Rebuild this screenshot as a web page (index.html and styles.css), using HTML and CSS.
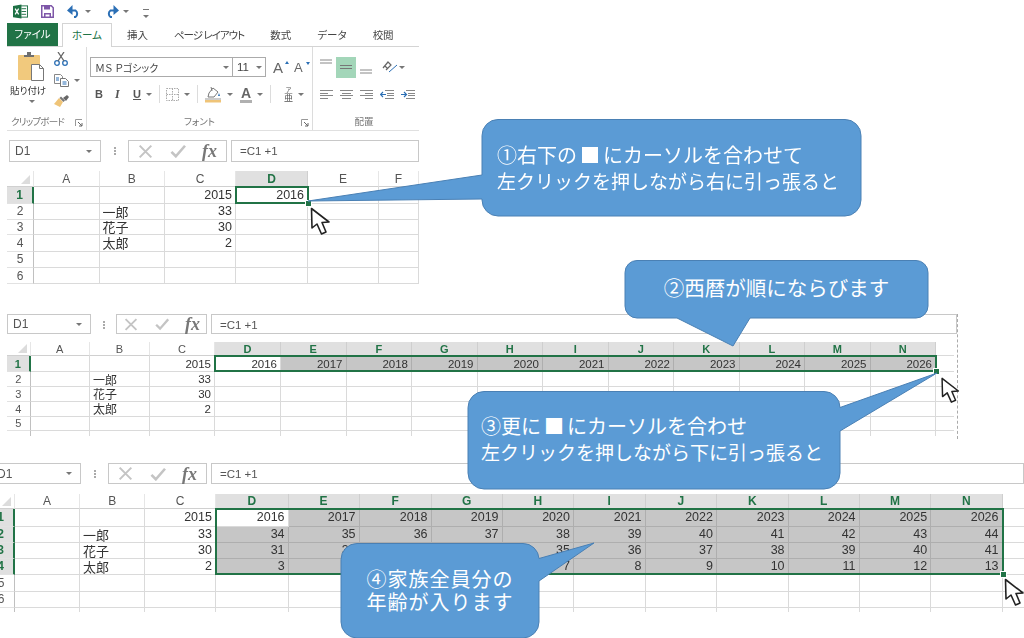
FILE: index.html
```html
<!DOCTYPE html>
<html lang="ja">
<head>
    <meta charset="UTF-8">
    <title>Excel 連続データ</title>
    <link rel="stylesheet" href="styles.css">
</head>
<body>

    <svg class="defs" width="0" height="0">
        <symbol id="pointer" viewBox="0 0 20 29">
            <path d="M1.5 1.5 2 21l5-4 4.5 10 4.5-2-4-9.5 7-.5z" fill="#fff" stroke="#222" stroke-width="1.6" stroke-linejoin="round"/>
        </symbol>
        <symbol id="launcher" viewBox="0 0 8 8">
            <path d="M.5 7V.5H7" fill="none" stroke="#999"/><path d="M3 3l4 4M7 4v3H4" fill="none" stroke="#666"/>
        </symbol>
        <symbol id="cross" viewBox="0 0 18 18">
            <path d="M2 2l14 14M16 2 2 16" stroke="#c4c4c4" stroke-width="2.4"/>
        </symbol>
        <symbol id="check" viewBox="0 0 18 16">
            <path d="M1.5 9l5 5L17 2" fill="none" stroke="#c4c4c4" stroke-width="3"/>
        </symbol>
    </svg>

    <!-- 1: ribbon and first sheet -->
    <section class="shot shot-1">
        <div class="qat">
            <svg class="q-excel" width="15" height="15" viewBox="0 0 16 15"><rect x="6.5" y="1.5" width="9" height="12" fill="#fff" stroke="#1f7145"/><path d="M9 4.5h5M9 7.5h5M9 10.5h5" stroke="#1f7145"/><path d="M0 1.5 9 0v15l-9-1.5z" fill="#1f7145"/><path d="M2.3 4.5 6 10.5M6 4.5l-3.7 6" stroke="#fff" stroke-width="1.3"/></svg>
            <svg class="q-save" width="13" height="13" viewBox="0 0 13 13"><path d="M.75.75h9.5l2 2v9.5H.75z" fill="#fff" stroke="#7e57a8" stroke-width="1.5"/><path d="M3 1h6v3.5H3zM3 8h7v4H3z" fill="#7e57a8"/><path d="M4.5 9.5h4v2h-4z" fill="#fff"/></svg>
            <svg class="q-undo" width="14" height="13" viewBox="0 0 14 13"><path d="M2 5.5h6.5a4 4 0 0 1 0 6.5H7" fill="none" stroke="#2b6fb5" stroke-width="2"/><path d="M5.5 0v10L0 5.5z" fill="#2b6fb5"/></svg>
            <span class="caret q-caret"></span>
            <svg class="q-redo" width="14" height="13" viewBox="0 0 14 13"><path d="M12 5.5H5.500a4 4 0 0 0 0 6.5H7" fill="none" stroke="#2b6fb5" stroke-width="2"/><path d="M8.5 0v10L14 5.5z" fill="#2b6fb5"/></svg>
            <span class="caret q-caret"></span>
            <span class="q-more"><span class="caret"></span></span>
        </div>
        <div class="tabs">
            <div class="tab-file">ファイル</div>
            <div class="tab-home">ホーム</div>
            <div class="tab">挿入</div>
            <div class="tab tab-wide">ページ レイアウト</div>
            <div class="tab">数式</div>
            <div class="tab">データ</div>
            <div class="tab">校閲</div>
        </div>
        <div class="ribbon">
            <div class="group g-clip">
                <div class="group-body">
                    <div class="paste">
                        <svg class="paste-icon" width="27" height="29" viewBox="0 0 27 29"><rect y="3" width="22" height="25" rx="1" fill="#f1c97d"/><path d="M6 5V3h3V0h4v3h3v2z" fill="#6f6f6f"/><path d="M13.5 12.5h8l4 4v12h-12z" fill="#fff" stroke="#777"/><path d="M21.5 12.5v4h4" fill="none" stroke="#777"/></svg>
                        <span class="paste-label">貼り付け</span>
                        <span class="caret"></span>
                    </div>
                    <div class="clip-tools">
                        <svg width="14" height="14" viewBox="0 0 14 14"><circle cx="3" cy="11" r="2.3" fill="none" stroke="#2b6fb5" stroke-width="1.3"/><circle cx="11" cy="11" r="2.3" fill="none" stroke="#2b6fb5" stroke-width="1.3"/><path d="M4 9 10 0M10 9 4 0" stroke="#666" stroke-width="1.3"/></svg>
                        <div class="copy-row">
                            <svg width="15" height="13" viewBox="0 0 15 13"><path d="M.5.5h6l2 2v7h-8z" fill="#fff" stroke="#888"/><path d="M6.500 4.5h5l3 3v5h-8z" fill="#fff" stroke="#777"/><path d="M2 4h3M2 6h3M8.5 8h4M8.5 10h4" stroke="#2b6fb5"/></svg>
                            <span class="caret"></span>
                        </div>
                        <svg width="15" height="12" viewBox="0 0 15 12"><path d="M0 9 5 3l4 4-3 5z" fill="#efc478"/><path d="M5.5 3 7 1.5l4 4L9.5 7z" fill="#777"/><path d="M9 3l4-3 2 2-3 4z" fill="#666"/></svg>
                    </div>
                </div>
                <div class="group-label">クリップボード</div>
                <svg class="launcher" width="8" height="8"><use href="#launcher"/></svg>
            </div>
            <div class="group g-font">
                <div class="group-body stack">
                    <div class="tool-row">
                        <div class="select font-name">ＭＳ Ｐゴシック<span class="caret"></span></div>
                        <div class="select font-size">11<span class="caret"></span></div>
                        <div class="grow">A<i class="tip-up"></i></div>
                        <div class="grow small">A<i class="tip-down"></i></div>
                    </div>
                    <div class="tool-row row-two">
                        <b class="btn-b">B</b>
                        <i class="btn-i">I</i>
                        <u class="btn-u">U</u><span class="caret"></span>
                        <span class="vsep"></span>
                        <svg width="13" height="13" viewBox="0 0 13 13"><path d="M.5.5h12v12H.5zM6.5.5v12M.5 6.5h12" fill="none" stroke="#aaa" stroke-dasharray="1.5 1"/></svg><span class="caret"></span>
                        <span class="vsep"></span>
                        <svg width="18" height="17" viewBox="0 0 18 17"><path d="M5 7l4-5 5 4-4 5H4z" fill="#fff" stroke="#777"/><path d="M7 1l1 4" stroke="#777"/><path d="M15 7l1 3-2 0z" fill="#2b6fb5"/><path d="M1 14h16v2.5H1z" fill="#efc478"/><path d="M1 13h16" stroke="#999"/></svg><span class="caret"></span>
                        <span class="font-color">A</span><span class="caret"></span>
                        <span class="vsep"></span>
                        <span class="phonetic"><small>ア</small>亜</span><span class="caret"></span>
                    </div>
                </div>
                <div class="group-label">フォント</div>
                <svg class="launcher" width="8" height="8"><use href="#launcher"/></svg>
            </div>
            <div class="group g-align">
                <div class="group-body stack">
                    <div class="tool-row">
                        <span class="align-btn"><svg width="12" height="21" viewBox="0 0 12 21"><path d="M0 3h12M0 6h12" stroke="#888"/></svg></span>
                        <span class="align-btn on"><svg width="12" height="21" viewBox="0 0 12 21"><path d="M0 8.5h12M0 11.5h12" stroke="#777"/></svg></span>
                        <span class="align-btn"><svg width="12" height="21" viewBox="0 0 12 21"><path d="M0 13h12M0 16h12" stroke="#888"/></svg></span>
                        <svg class="orient" width="16" height="15" viewBox="0 0 16 15"><path d="M1 8l5-6 3 3-5 5M3 6l3 3" fill="none" stroke="#666" stroke-width="1.2"/><path d="M7 12 15 5" stroke="#2b6fb5" stroke-width="1"/></svg>
                        <span class="caret"></span>
                    </div>
                    <div class="tool-row row-two para">
                        <svg width="13" height="9" viewBox="0 0 13 9"><path d="M0 .5h13M0 3.500h8M0 5.500h13M0 8.500h8" stroke="#888"/></svg>
                        <svg width="13" height="9" viewBox="0 0 13 9"><path d="M0 .5h13M2 3.500h9M0 5.500h13M2 8.500h9" stroke="#888"/></svg>
                        <svg width="13" height="9" viewBox="0 0 13 9"><path d="M0 .5h13M5 3.500h8M0 5.500h13M5 8.500h8" stroke="#888"/></svg>
                        <svg width="14" height="9" viewBox="0 0 14 9"><path d="M5 .5h9M7 3.500h7M7 5.500h7M5 8.500h9" stroke="#888"/><path d="M6 4.500H1M3 2 .5 4.500 3 7" fill="none" stroke="#2b6fb5" stroke-width="1.2"/></svg>
                        <svg width="14" height="9" viewBox="0 0 14 9"><path d="M5 .5h9M7 3.500h7M7 5.500h7M5 8.500h9" stroke="#888"/><path d="M0 4.500h5M3 2l2.500 2.500L3 7" fill="none" stroke="#2b6fb5" stroke-width="1.2"/></svg>
                    </div>
                </div>
                <div class="group-label">配置</div>
            </div>
        </div>
        <div class="fbar">
            <div class="name-box">D1<span class="caret"></span></div>
            <span class="dots"></span>
            <div class="fx-box">
                <svg class="ic-x" width="15" height="15"><use href="#cross"/></svg>
                <svg class="ic-ok" width="16" height="14"><use href="#check"/></svg>
                <span class="fx">fx</span>
            </div>
            <div class="formula">=C1 +1</div>
        </div>
        <div class="sheet">
            <div class="hc corner"></div><div class="hc">A</div><div class="hc">B</div><div class="hc">C</div><div class="hc on">D</div><div class="hc">E</div><div class="hc">F</div>
            <div class="hr on">1</div><div></div><div></div><div>2015</div><div>2016</div><div></div><div></div>
            <div class="hr">2</div><div></div><div class="name">一郎</div><div>33</div><div></div><div></div><div></div>
            <div class="hr">3</div><div></div><div class="name">花子</div><div>30</div><div></div><div></div><div></div>
            <div class="hr">4</div><div></div><div class="name">太郎</div><div>2</div><div></div><div></div><div></div>
            <div class="hr">5</div><div></div><div></div><div></div><div></div><div></div><div></div>
            <div class="hr">6</div><div></div><div></div><div></div><div></div><div></div><div></div>
            <div class="range"><span class="handle"></span></div>
        </div>
    </section>

    <!-- 2: one row filled -->
    <section class="shot shot-2">
        <div class="fbar">
            <div class="name-box">D1<span class="caret"></span></div>
            <span class="dots"></span>
            <div class="fx-box">
                <svg class="ic-x" width="15" height="15"><use href="#cross"/></svg>
                <svg class="ic-ok" width="16" height="14"><use href="#check"/></svg>
                <span class="fx">fx</span>
            </div>
            <div class="formula">=C1 +1</div>
        </div>
        <div class="sheet">
            <div class="hc corner"></div><div class="hc">A</div><div class="hc">B</div><div class="hc">C</div><div class="hc on">D</div><div class="hc on">E</div><div class="hc on">F</div><div class="hc on">G</div><div class="hc on">H</div><div class="hc on">I</div><div class="hc on">J</div><div class="hc on">K</div><div class="hc on">L</div><div class="hc on">M</div><div class="hc on">N</div><div class="blank"></div>
            <div class="hr on">1</div><div></div><div></div><div>2015</div><div>2016</div><div class="g">2017</div><div class="g">2018</div><div class="g">2019</div><div class="g">2020</div><div class="g">2021</div><div class="g">2022</div><div class="g">2023</div><div class="g">2024</div><div class="g">2025</div><div class="g">2026</div><div class="blank"></div>
            <div class="hr">2</div><div></div><div class="name">一郎</div><div>33</div><div></div><div></div><div></div><div></div><div></div><div></div><div></div><div></div><div></div><div></div><div></div><div class="blank"></div>
            <div class="hr">3</div><div></div><div class="name">花子</div><div>30</div><div></div><div></div><div></div><div></div><div></div><div></div><div></div><div></div><div></div><div></div><div></div><div class="blank"></div>
            <div class="hr">4</div><div></div><div class="name">太郎</div><div>2</div><div></div><div></div><div></div><div></div><div></div><div></div><div></div><div></div><div></div><div></div><div></div><div class="blank"></div>
            <div class="hr">5</div><div></div><div></div><div></div><div></div><div></div><div></div><div></div><div></div><div></div><div></div><div></div><div></div><div></div><div></div><div class="blank"></div>
            <div class="hr"></div><div></div><div></div><div></div><div></div><div></div><div></div><div></div><div></div><div></div><div></div><div></div><div></div><div></div><div></div><div class="blank"></div>
            <div class="range"><span class="handle"></span></div>
        </div>
    </section>

    <!-- 3: all rows filled -->
    <section class="shot shot-3">
        <div class="fbar">
            <div class="name-box">D1<span class="caret"></span></div>
            <span class="dots"></span>
            <div class="fx-box">
                <svg class="ic-x" width="15" height="15"><use href="#cross"/></svg>
                <svg class="ic-ok" width="16" height="14"><use href="#check"/></svg>
                <span class="fx">fx</span>
            </div>
            <div class="formula">=C1 +1</div>
        </div>
        <div class="sheet">
            <div class="hc corner"></div><div class="hc">A</div><div class="hc">B</div><div class="hc">C</div><div class="hc on">D</div><div class="hc on">E</div><div class="hc on">F</div><div class="hc on">G</div><div class="hc on">H</div><div class="hc on">I</div><div class="hc on">J</div><div class="hc on">K</div><div class="hc on">L</div><div class="hc on">M</div><div class="hc on">N</div><div class="blank"></div>
            <div class="hr on">1</div><div></div><div></div><div>2015</div><div>2016</div><div class="g">2017</div><div class="g">2018</div><div class="g">2019</div><div class="g">2020</div><div class="g">2021</div><div class="g">2022</div><div class="g">2023</div><div class="g">2024</div><div class="g">2025</div><div class="g">2026</div><div class="blank"></div>
            <div class="hr on">2</div><div></div><div class="name">一郎</div><div>33</div><div class="g">34</div><div class="g">35</div><div class="g">36</div><div class="g">37</div><div class="g">38</div><div class="g">39</div><div class="g">40</div><div class="g">41</div><div class="g">42</div><div class="g">43</div><div class="g">44</div><div class="blank"></div>
            <div class="hr on">3</div><div></div><div class="name">花子</div><div>30</div><div class="g">31</div><div class="g">32</div><div class="g">33</div><div class="g">34</div><div class="g">35</div><div class="g">36</div><div class="g">37</div><div class="g">38</div><div class="g">39</div><div class="g">40</div><div class="g">41</div><div class="blank"></div>
            <div class="hr on">4</div><div></div><div class="name">太郎</div><div>2</div><div class="g">3</div><div class="g">4</div><div class="g">5</div><div class="g">6</div><div class="g">7</div><div class="g">8</div><div class="g">9</div><div class="g">10</div><div class="g">11</div><div class="g">12</div><div class="g">13</div><div class="blank"></div>
            <div class="hr">5</div><div></div><div></div><div></div><div></div><div></div><div></div><div></div><div></div><div></div><div></div><div></div><div></div><div></div><div></div><div class="blank"></div>
            <div class="hr">6</div><div></div><div></div><div></div><div></div><div></div><div></div><div></div><div></div><div></div><div></div><div></div><div></div><div></div><div></div><div class="blank"></div>
            <div class="hr"></div><div></div><div></div><div></div><div></div><div></div><div></div><div></div><div></div><div></div><div></div><div></div><div></div><div></div><div></div><div class="blank"></div>
            <div class="range"><span class="handle"></span></div>
        </div>
    </section>

    <svg class="pointer p-1"><use href="#pointer"/></svg>
    <svg class="pointer p-2"><use href="#pointer"/></svg>
    <svg class="pointer p-3"><use href="#pointer"/></svg>

    <div class="callout c-1">
        <svg class="bubble" width="379" height="97"><path d="M16 .5H363a16 16 0 0 1 16 16V81a16 16 0 0 1-16 16H16A16 16 0 0 1 0 81V80L-174 82 0 56V16.5A16 16 0 0 1 16 .5z"/></svg>
        <p><span class="lead">①右下の<span class="sq">■</span>にカーソルを合わせて</span><br>左クリックを押しながら右に引っ張ると</p>
    </div>
    <div class="callout c-2">
        <svg class="bubble" width="303" height="58"><path d="M12 .5H291a12 12 0 0 1 12 12V46a12 12 0 0 1-12 12H125L108 86 52 58H12A12 12 0 0 1 0 46V12.5A12 12 0 0 1 12 .5z"/></svg>
        <p>②西暦が順にならびます</p>
    </div>
    <div class="callout c-3">
        <svg class="bubble" width="372" height="98"><path d="M16 .5H356a16 16 0 0 1 16 16L469-18 372 40V82a16 16 0 0 1-16 16H16A16 16 0 0 1 0 82V16.5A16 16 0 0 1 16 .5z"/></svg>
        <p><span class="lead">③更に<span class="sq">■</span>にカーソルを合わせ</span><br>左クリックを押しながら下に引っ張ると</p>
    </div>
    <div class="callout c-4">
        <svg class="bubble" width="198" height="95"><path d="M16 .5H182a16 16 0 0 1 16 15L253 0 198 38V79a16 16 0 0 1-16 16H16A16 16 0 0 1 0 79V16.5A16 16 0 0 1 16 .5z"/></svg>
        <p>④家族全員分の<br>年齢が入ります</p>
    </div>

</body>
</html>
```

FILE: styles.css
```css
* {
    box-sizing: border-box;
}
body {
    margin: 0;
    width: 1024px;
    height: 638px;
    position: relative;
    overflow: hidden;
    background: #fff;
    font-family: "Noto Sans CJK JP", "Liberation Sans", sans-serif;
    color: #333;
}
.defs {
    position: absolute;
}
.caret {
    display: inline-block;
    width: 0;
    height: 0;
    border-top: 3px solid #777;
    border-left: 3px solid transparent;
    border-right: 3px solid transparent;
}

/* the three pasted screenshots sit freely on the canvas */
.shot {
    position: absolute;
    overflow: hidden;
    filter: blur(.35px);
}
.shot-1 {
    left: 0;
    top: 0;
    width: 419px;
    height: 285px;
}
.shot-2 {
    left: 7px;
    top: 314px;
    width: 951px;
    height: 125px;
    border-right: 1px dashed #aaa;
}
.shot-3 {
    left: -12px;
    top: 463px;
    width: 1036px;
    height: 150px;
}

/* quick access */
.qat {
    height: 23px;
    display: flex;
    align-items: center;
    padding-left: 13px;
}
.q-save {
    margin-left: 13px;
}
.q-undo {
    margin-left: 13px;
}
.q-redo {
    margin-left: 14px;
}
.q-caret {
    margin-left: 4px;
}
.q-more {
    margin-left: 14px;
    border-top: 1px solid #777;
    padding-top: 1px;
    line-height: 0;
    margin-top: 3px;
}

/* tabs */
.tabs {
    height: 23px;
    display: flex;
    padding-left: 7px;
    font-size: 10.5px;
    font-feature-settings: "palt";
    color: #444;
    position: relative;
}
.tab-file {
    width: 51px;
    background: #217346;
    color: #fff;
    text-align: center;
    line-height: 22px;
}
.tab-home {
    width: 50px;
    margin-left: 4px;
    height: 24px;
    background: #fff;
    color: #217346;
    border: 1px solid #d4d4d4;
    border-bottom: 0;
    text-align: center;
    line-height: 22px;
    position: relative;
    z-index: 1;
}
.tab {
    padding: 0 13px;
    line-height: 23px;
}
.tab:nth-child(3) {
    margin-left: 2px;
}
.tab-wide {
    letter-spacing: -1px;
}

/* ribbon */
.ribbon {
    height: 85px;
    margin-left: 7px;
    display: flex;
    border-top: 1px solid #d4d4d4;
    border-bottom: 1px solid #e0e0e0;
}
.group {
    position: relative;
    display: flex;
    flex-direction: column;
}
.g-clip {
    width: 80px;
    border-right: 1px solid #dcdcdc;
}
.g-font {
    width: 226px;
    border-right: 1px solid #dcdcdc;
}
.g-align {
    flex: 1;
}
.group-body {
    flex: 1;
    display: flex;
}
.group-body.stack {
    flex-direction: column;
    padding-top: 10px;
}
.group-label {
    height: 16px;
    text-align: center;
    font-size: 9.5px;
    line-height: 15px;
    color: #777;
    font-feature-settings: "palt";
}
.g-clip .group-label {
    text-align: left;
    padding-left: 4px;
    letter-spacing: -.8px;
    white-space: nowrap;
}
.g-align .group-label {
    padding-right: 4px;
}
.launcher {
    position: absolute;
    right: 3px;
    bottom: 3px;
}
.paste {
    width: 42px;
    margin-left: 3px;
    padding-top: 5px;
    display: flex;
    flex-direction: column;
    align-items: flex-start;
}
.paste-icon {
    margin-left: 8px;
}
.paste-label {
    font-size: 9.5px;
    line-height: 14px;
    margin-top: 2px;
    white-space: nowrap;
    font-feature-settings: "palt";
}
.paste .caret {
    margin: 3px 0 0 19px;
}
.clip-tools {
    margin-left: 2px;
    padding-top: 5px;
    display: flex;
    flex-direction: column;
    gap: 8px;
    align-items: flex-start;
}
.copy-row {
    display: flex;
    align-items: center;
    gap: 5px;
}
.tool-row {
    display: flex;
    align-items: center;
    height: 20px;
    padding-left: 3px;
}
.select {
    height: 20px;
    border: 1px solid #ababab;
    display: flex;
    align-items: center;
    justify-content: space-between;
    padding: 0 3px 0 4px;
    font-size: 10px;
    color: #444;
    white-space: nowrap;
}
.font-name {
    width: 143px;
    font-family: "Liberation Sans", "Noto Sans CJK JP", sans-serif;
    font-feature-settings: "palt";
}
.font-size {
    width: 34px;
    margin-left: -1px;
    font-size: 11.5px;
    font-family: "Liberation Sans", sans-serif;
}
.grow {
    font-family: "Liberation Sans", sans-serif;
    font-size: 15px;
    color: #666;
    margin-left: 7px;
    width: 13px;
    position: relative;
}
.grow.small {
    font-size: 13px;
    margin-left: 8px;
}
.tip-up,
.tip-down {
    position: absolute;
    right: -3px;
    top: 2px;
    width: 0;
    height: 0;
    border-left: 2px solid transparent;
    border-right: 2px solid transparent;
}
.tip-up {
    border-bottom: 3px solid #2b6fb5;
}
.tip-down {
    border-top: 3px solid #2b6fb5;
}
.row-two {
    margin-top: 8px;
    height: 18px;
    font-family: "Liberation Serif", serif;
    color: #555;
    padding-left: 8px;
}
.row-two .caret {
    margin-left: 5px;
}
.btn-b {
    font: bold 11px "Liberation Sans", sans-serif;
    width: 19px;
}
.btn-i {
    font-size: 12px;
    font-weight: bold;
    width: 19px;
    padding-left: 1px;
}
.btn-u {
    font: bold 11px "Liberation Sans", sans-serif;
}
.vsep {
    width: 1px;
    height: 18px;
    background: #dcdcdc;
    margin: 0 6px 0 7px;
}
.font-color {
    font: bold 14px "Liberation Sans", sans-serif;
    line-height: 14px;
    margin-left: 7px;
    color: #666;
    border-bottom: 3px solid #b0b0b0;
    padding: 0 1px;
}
.phonetic {
    display: flex;
    flex-direction: column;
    align-items: center;
    margin-left: 7px;
    font-family: "Noto Sans CJK JP", sans-serif;
    font-size: 9px;
    line-height: 8px;
}
.phonetic small {
    font-size: 6px;
}
.align-btn {
    width: 20px;
    height: 21px;
    display: flex;
    justify-content: center;
}
.align-btn.on {
    background: #a3d6b9;
}
.orient {
    margin-left: 6px;
}
.g-align .caret {
    margin-left: 1px;
}
.para {
    padding-left: 7px;
    gap: 7px;
}

/* formula bar */
.fbar {
    height: 22px;
    display: flex;
    color: #555;
}
.shot-1 .fbar {
    margin: 9px 0 9px 9px;
}
.name-box {
    width: 92px;
    border: 1px solid #c8c8c8;
    display: flex;
    align-items: center;
    justify-content: space-between;
    padding: 0 8px 0 5px;
    font: 12px "Liberation Sans", sans-serif;
}
.dots {
    width: 2px;
    height: 8px;
    margin: 7px 12px 0 13px;
    border-left: 2px dotted #aaa;
}
.fx-box {
    width: 99px;
    border: 1px solid #c8c8c8;
    display: flex;
    align-items: center;
    padding-left: 9px;
    flex: none;
}
.ic-ok {
    margin-left: 17px;
}
.fx {
    margin-left: 16px;
    font: italic bold 18px/18px "Liberation Serif", serif;
    color: #777;
}
.formula {
    flex: 1;
    margin-left: 4px;
    border: 1px solid #c8c8c8;
    padding-left: 8px;
    font: 11.5px/20px "Liberation Sans", sans-serif;
}
.shot-2 .fbar {
    height: 20px;
    margin: 0 0 8px;
}
.shot-2 .name-box {
    width: 84px;
}
.shot-2 .dots {
    margin-right: 11px;
    margin-left: 12px;
}
.shot-2 .fx-box {
    width: 91px;
    padding-left: 7px;
}
.shot-2 .fx-box svg {
    width: 14px;
}
.shot-3 .fbar {
    height: 21px;
    margin: 0 0 10px 3px;
}
.shot-3 .name-box {
    width: 90px;
}

/* sheets */
.sheet {
    display: grid;
    position: relative;
    font-family: "Liberation Sans", "Noto Sans CJK JP", sans-serif;
}
.shot-1 .sheet {
    margin-left: 7px;
    grid-template-columns: 27px 65.5px 65.5px 71px 72px 71px 40px;
    grid-template-rows: 16px 17px 15.5px 15.5px 16.5px 16.5px 16px;
    font-size: 12.5px;
}
.shot-2 .sheet {
    grid-template-columns: 23.5px 59.5px 60px 65px 66px repeat(10, 65.5px) 18px;
    grid-template-rows: 14px 16px 15px 14.5px 15px 14.5px 15px;
    height: 94px;
    overflow: hidden;
    font-size: 11.5px;
}
.shot-3 .sheet {
    grid-template-columns: 27px 65px 65.3px 70.7px 72.6px 71px 72px 71px 71.4px 71.6px 71.4px 71.6px 71px 71.7px 71.3px 21.4px;
    grid-template-rows: 15px 17.5px 16px 16px 16.5px 16.5px 16.5px 16px;
    height: 118px;
    overflow: hidden;
    font-size: 12.5px;
}
.sheet > div {
    display: flex;
    align-items: center;
    justify-content: flex-end;
    padding-right: 3px;
    border-right: 1px solid #dadada;
    border-bottom: 1px solid #dadada;
    white-space: nowrap;
}
.sheet > .name {
    justify-content: flex-start;
    padding: 0 0 0 3px;
    font-family: "Noto Sans CJK JP", sans-serif;
    font-size: 1.04em;
}
.sheet > .g {
    background: #c6c6c6;
    border-color: #aeaeae;
}
.sheet > .hc,
.sheet > .hr {
    justify-content: center;
    padding: 0;
    color: #555;
    font-size: .96em;
}
.sheet > .hc {
    border-right-color: #e6e6e6;
    border-bottom-color: #d0d0d0;
}
.sheet > .hr {
    border-right-color: #c0c0c0;
    border-bottom-color: #e2e2e2;
}
.sheet > .hc.on,
.sheet > .hr.on {
    background: #e0e0e0;
    color: #217346;
    font-weight: bold;
    border-right-color: #cfcfcf;
}
.sheet > .hr.on {
    border-right: 2px solid #217346;
}
.sheet > .corner {
    position: relative;
}
.corner::after {
    content: "";
    position: absolute;
    right: 3px;
    bottom: 2px;
    border-left: 9px solid transparent;
    border-bottom: 9px solid #dcdcdc;
}
.sheet > .blank {
    border-right: 0;
}
.sheet > .range {
    position: absolute;
    inset: -1px -1px 0 -1px;
    padding: 0;
    background: transparent;
    border: 2px solid #217346;
}
.shot-1 .range {
    grid-column: 5 / 6;
    grid-row: 2 / 3;
}
.shot-2 .range {
    grid-column: 5 / 16;
    grid-row: 2 / 3;
}
.shot-3 .range {
    grid-column: 5 / 16;
    grid-row: 2 / 6;
}
.handle {
    position: absolute;
    right: -5px;
    bottom: -5px;
    width: 7px;
    height: 7px;
    background: #217346;
    border: 1px solid #fff;
}

/* mouse pointers */
.pointer {
    position: absolute;
    width: 20px;
    height: 29px;
}
.p-1 {
    left: 310px;
    top: 207px;
}
.p-2 {
    left: 940px;
    top: 377px;
    height: 27px;
}
.p-3 {
    left: 1004px;
    top: 578px;
}

/* callouts */
.callout {
    position: absolute;
    color: #fff;
    font-size: 19px;
    line-height: 26px;
}
.callout p {
    position: relative;
    margin: 0;
    white-space: nowrap;
}
.lead {
    font-size: 20px;
}
.sq {
    margin: 0 3px;
}
.bubble {
    position: absolute;
    left: 0;
    top: 0;
    overflow: visible;
}
.bubble path {
    fill: #5b9bd5;
    stroke: #4a80b4;
    stroke-width: 1;
}
.c-1 {
    left: 482px;
    top: 119px;
    width: 379px;
    height: 97px;
    padding: 23px 0 0 15px;
}
.c-2 {
    left: 625px;
    top: 260px;
    width: 303px;
    height: 58px;
    padding-top: 14px;
    text-align: center;
    font-size: 20.5px;
}
.c-3 {
    left: 468px;
    top: 391px;
    width: 372px;
    height: 98px;
    padding: 22px 0 0 13px;
}
.c-4 {
    left: 341px;
    top: 543px;
    width: 198px;
    height: 95px;
    padding-top: 24px;
    text-align: center;
    font-size: 20px;
    line-height: 23px;
    letter-spacing: 1px;
}
```
